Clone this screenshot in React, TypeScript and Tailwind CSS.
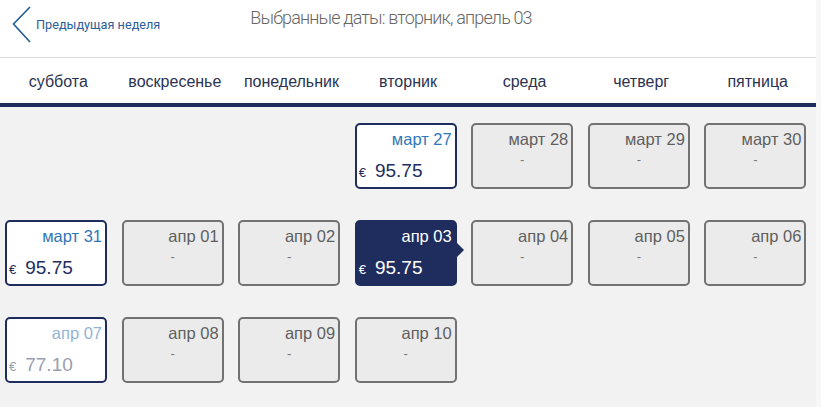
import React from 'react';

type Day = {
  label: string;
  price?: string;
  kind: 'open' | 'empty' | 'active' | 'faded' | 'blank';
};

const days = ['суббота', 'воскресенье', 'понедельник', 'вторник', 'среда', 'четверг', 'пятница'];

const rows: Day[][] = [
  [
    { label: '', kind: 'blank' },
    { label: '', kind: 'blank' },
    { label: '', kind: 'blank' },
    { label: 'март 27', price: '95.75', kind: 'open' },
    { label: 'март 28', kind: 'empty' },
    { label: 'март 29', kind: 'empty' },
    { label: 'март 30', kind: 'empty' },
  ],
  [
    { label: 'март 31', price: '95.75', kind: 'open' },
    { label: 'апр 01', kind: 'empty' },
    { label: 'апр 02', kind: 'empty' },
    { label: 'апр 03', price: '95.75', kind: 'active' },
    { label: 'апр 04', kind: 'empty' },
    { label: 'апр 05', kind: 'empty' },
    { label: 'апр 06', kind: 'empty' },
  ],
  [
    { label: 'апр 07', price: '77.10', kind: 'faded' },
    { label: 'апр 08', kind: 'empty' },
    { label: 'апр 09', kind: 'empty' },
    { label: 'апр 10', kind: 'empty' },
    { label: '', kind: 'blank' },
    { label: '', kind: 'blank' },
    { label: '', kind: 'blank' },
  ],
];

function DayCard({ day }: { day: Day }) {
  if (day.kind === 'blank') return <div className="h-[66px]" />;

  if (day.kind === 'empty') {
    return (
      <div className="w-[102px] h-[66px] rounded-[5px] border-2 border-[#727272] bg-[#ebebeb] flex flex-col">
        <div className="text-right pr-[3px] pt-[5px] text-[16.5px] leading-[18px] text-[#5f5f5f]">{day.label}</div>
        <div className="text-center pt-[5px] text-[13px] leading-[14px] text-[#777]">-</div>
      </div>
    );
  }

  const active = day.kind === 'active';
  const faded = day.kind === 'faded';
  const box = active ? 'bg-[#1f2d5e] border-[#1f2d5e]' : 'bg-white border-[#1f2d5e]';
  const dateCol = active ? 'text-white' : faded ? 'text-[#93b4d6]' : 'text-[#2f77b7]';
  const priceCol = active ? 'text-white' : faded ? 'text-[#98a0b0]' : 'text-[#1f2d5e]';

  return (
    <div className={`relative w-[102px] h-[66px] rounded-[5px] border-2 flex flex-col justify-between ${box}`}>
      <div className={`text-right pr-[3px] pt-[5px] text-[16.5px] leading-[18px] ${dateCol}`}>{day.label}</div>
      <div className={`flex items-baseline pl-[2px] pb-[5px] ${priceCol}`}>
        <span className="text-[13px] mr-[9px]">€</span>
        <span className="text-[19px] leading-[20px]">{day.price}</span>
      </div>
      {active && (
        <div className="absolute right-[-9px] top-[21px] w-0 h-0 border-y-[7px] border-y-transparent border-l-[7px] border-l-[#1f2d5e]" />
      )}
    </div>
  );
}

export default function App() {
  return (
    <div className="w-[821px] h-[407px] flex bg-[#f7f7f7] overflow-hidden" style={{ fontFamily: '"Liberation Sans", Arial, sans-serif' }}>
      <div className="w-[816px] flex flex-col">
        {/* header */}
        <div className="h-[58px] bg-white border-b border-[#dddddd] flex items-start">
          <div className="flex items-center pl-[12px] pt-[6px] gap-[4px]">
            <svg width="20" height="38" viewBox="0 0 20 38" fill="none">
              <path d="M18 1 L1.5 18 L18 36" stroke="#1f5c8f" strokeWidth="1.6" />
            </svg>
            <span className="text-[12.7px] text-[#2c5d98]" style={{ fontFamily: 'Roboto, sans-serif' }}>
              Предыдущая неделя
            </span>
          </div>
          <div
            className="ml-[90px] pt-[4px] text-[18px] font-light tracking-[-0.85px] text-[#666]"
            style={{ fontFamily: 'Roboto, sans-serif' }}
          >
            Выбранные даты: вторник, апрель 03
          </div>
        </div>

        {/* week days */}
        <div className="h-[45px] bg-white grid grid-cols-7 items-center">
          {days.map((d) => (
            <div key={d} className="text-center text-[16px] text-[#2b3350] pt-[2px]">
              {d}
            </div>
          ))}
        </div>
        <div className="h-[4px] bg-[#1f2d5e]" />

        {/* calendar */}
        <div className="flex-1 bg-[#f2f2f2] pt-[16px] flex flex-col gap-[31px]">
          {rows.map((row, i) => (
            <div key={i} className="grid grid-cols-7">
              {row.map((day, j) => (
                <div key={j} className="pl-[5px]">
                  <DayCard day={day} />
                </div>
              ))}
            </div>
          ))}
        </div>
      </div>
    </div>
  );
}
